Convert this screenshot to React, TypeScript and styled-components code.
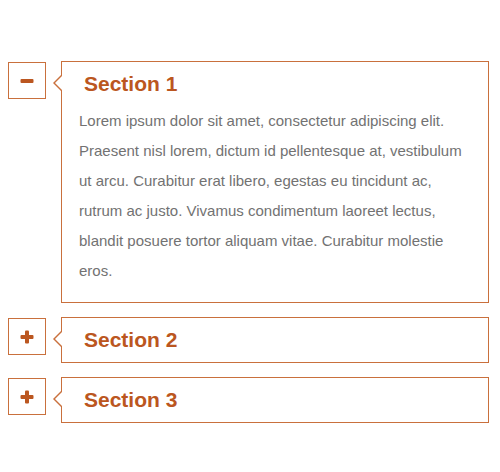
import React, { useState } from "react";
import styled, { createGlobalStyle } from "styled-components";

const GlobalStyle = createGlobalStyle`
  body {
    margin: 0;
    background: #ffffff;
    font-family: "Liberation Sans", Arial, sans-serif;
  }
`;

const Accordion = styled.div`
  display: flex;
  flex-direction: column;
  gap: 14px;
  padding: 61px 11px 0 8px;
`;

const Item = styled.div`
  display: flex;
  align-items: flex-start;
  gap: 15px;
`;

const Toggle = styled.button`
  flex: 0 0 auto;
  width: 38px;
  height: 37px;
  margin-top: 1px;
  padding: 0;
  border: 1px solid #c9703d;
  background: #fff;
  display: flex;
  align-items: center;
  justify-content: center;
  cursor: pointer;
`;

const Panel = styled.div`
  position: relative;
  flex: 1;
  border: 1px solid #c9703d;
  background: #fff;

  &::before,
  &::after {
    content: "";
    position: absolute;
    top: 13px;
    width: 0;
    height: 0;
    border-style: solid;
  }
  &::before {
    left: -9px;
    border-width: 8px 8px 8px 0;
    border-color: transparent #c9703d transparent transparent;
  }
  &::after {
    left: -7px;
    border-width: 8px 8px 8px 0;
    border-color: transparent #fff transparent transparent;
  }
`;

const Title = styled.h3`
  margin: 0;
  height: 44px;
  display: flex;
  align-items: center;
  padding-left: 22px;
  font-size: 21px;
  font-weight: bold;
  color: #bb5620;
`;

const Body = styled.p`
  margin: 0;
  padding: 0 18px 16px 17px;
  font-size: 15px;
  line-height: 30px;
  color: #727272;
`;

const Icon = ({ open }: { open: boolean }) => (
  <svg width="14" height="14" viewBox="0 0 14 14">
    <rect x="0.5" y="5" width="13" height="4" rx="1" fill="#bb5620" />
    {!open && <rect x="5" y="0.5" width="4" height="13" rx="1" fill="#bb5620" />}
  </svg>
);

const sections = [
  {
    title: "Section 1",
    text: "Lorem ipsum dolor sit amet, consectetur adipiscing elit. Praesent nisl lorem, dictum id pellentesque at, vestibulum ut arcu. Curabitur erat libero, egestas eu tincidunt ac, rutrum ac justo. Vivamus condimentum laoreet lectus, blandit posuere tortor aliquam vitae. Curabitur molestie eros.",
  },
  {
    title: "Section 2",
    text: "Nam mi. Proin porta, neque vitae ultrices rhoncus, justo nibh vehicula mauris, ac tempus risus ante sed tellus.",
  },
  {
    title: "Section 3",
    text: "Vestibulum ante ipsum primis in faucibus orci luctus et ultrices posuere cubilia curae.",
  },
];

const App: React.FC = () => {
  const [open, setOpen] = useState<number>(0);

  return (
    <>
      <GlobalStyle />
      <Accordion>
        {sections.map((s, i) => (
          <Item key={s.title}>
            <Toggle onClick={() => setOpen(open === i ? -1 : i)}>
              <Icon open={open === i} />
            </Toggle>
            <Panel>
              <Title>{s.title}</Title>
              {open === i && <Body>{s.text}</Body>}
            </Panel>
          </Item>
        ))}
      </Accordion>
    </>
  );
};

export default App;
